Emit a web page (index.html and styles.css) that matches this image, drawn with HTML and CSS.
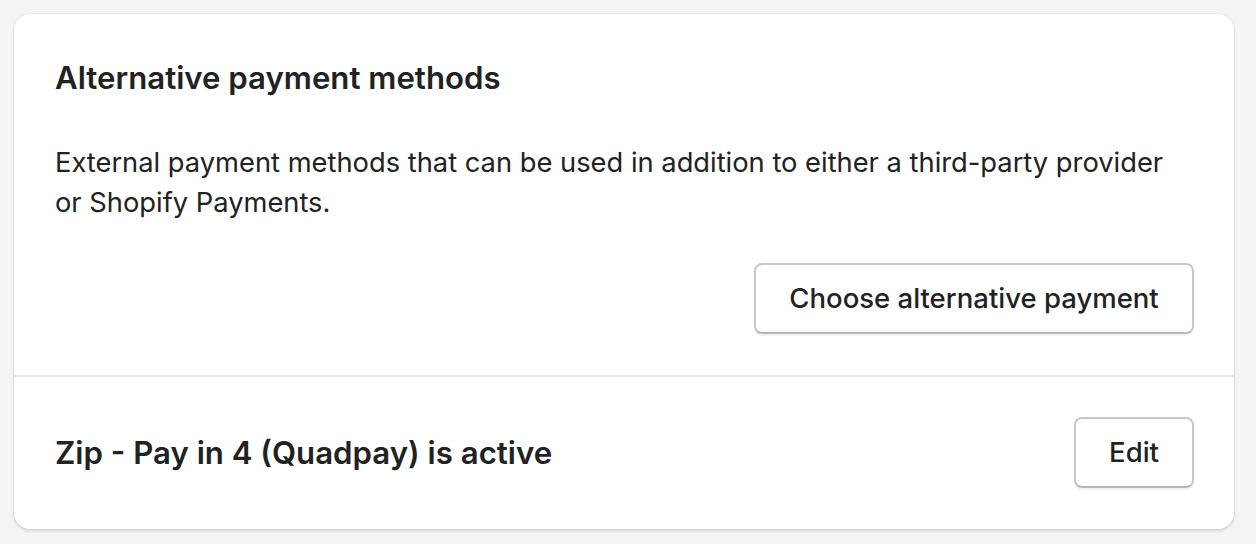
FILE: index.html
```html
<!DOCTYPE html>
<html>
<head>
<meta charset="utf-8">
<link rel="stylesheet" href="styles.css">
</head>
<body>
<div class="card">
  <div class="section">
    <h2 class="title">Alternative payment methods</h2>
    <p class="desc">External payment methods that can be used in addition to either a third-party provider or Shopify Payments.</p>
    <div class="actions">
      <button class="btn btn-wide">Choose alternative payment</button>
    </div>
  </div>
  <div class="section row">
    <h2 class="title">Zip - Pay in 4 (Quadpay) is active</h2>
    <button class="btn btn-edit">Edit</button>
  </div>
</div>
</body>
</html>
```
FILE: styles.css
```css
html, body {
  margin: 0;
  padding: 0;
}
body {
  background: #f4f4f4;
  padding: 14px 22px 16px 14px;
  font-family: Inter, "Noto Sans", "Liberation Sans", sans-serif;
  color: #202223;
}
.card {
  width: 1220px;
  background: #ffffff;
  border-radius: 16px;
  box-shadow: 0 0 0 1px rgba(63, 63, 68, 0.06), 0 2px 3px rgba(63, 63, 68, 0.15);
}
.section {
  padding: 40px 40px 41px 41px;
}
.section + .section {
  border-top: 2px solid #e4e5e7;
  padding-top: 40px;
  padding-bottom: 41px;
}
.title {
  margin: 0;
  font-size: 31.2px;
  line-height: 48px;
  font-weight: 600;
}
.desc {
  margin: 41px 0 0;
  font-size: 27.3px;
  line-height: 40px;
  font-weight: 400;
  max-width: 1130px;
}
.actions {
  display: flex;
  justify-content: flex-end;
  margin-top: 40px;
}
.row {
  display: flex;
  align-items: center;
  justify-content: space-between;
}
.btn {
  box-sizing: border-box;
  height: 71px;
  background: #ffffff;
  border: 2px solid #c4c8cc;
  border-bottom-color: #b4b8bc;
  border-radius: 8px;
  font-family: inherit;
  font-size: 27.5px;
  font-weight: 500;
  color: #202223;
  box-shadow: 0 2px 0 rgba(0, 0, 0, 0.05);
  padding: 0 0 2px;
}
.btn-wide {
  width: 440px;
}
.btn-edit {
  width: 120px;
}
```
